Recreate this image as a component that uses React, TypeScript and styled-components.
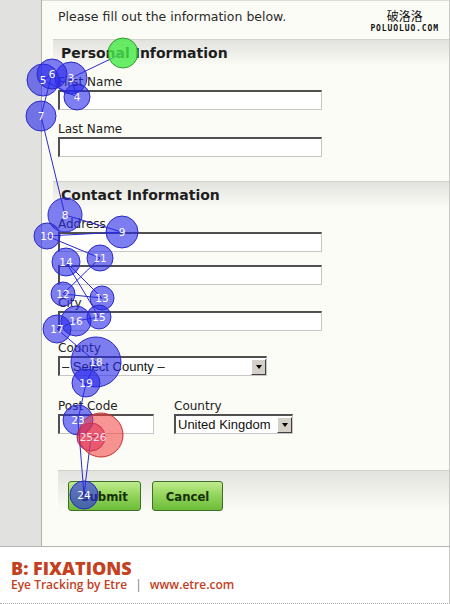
import React from "react";
import styled, { createGlobalStyle } from "styled-components";

const GlobalStyle = createGlobalStyle`
  html, body { margin: 0; padding: 0; background: #ffffff; }
  body { width: 450px; height: 604px; overflow: hidden; font-family: "DejaVu Sans", Verdana, sans-serif; }
  #root { width: 450px; height: 604px; }
`;

const Page = styled.div`
  position: relative;
  width: 450px;
  height: 604px;
  display: flex;
  flex-direction: column;
`;

const Main = styled.div`
  display: flex;
  height: 547px;
  flex: none;
  border-bottom: 1px solid #b4b4b2;
  box-sizing: border-box;
`;

const LeftStrip = styled.div`
  width: 41px;
  flex: none;
  background-color: #e6e7e5;
  background-image: radial-gradient(circle, #d9dbd9 0.6px, transparent 0.8px);
  background-size: 2px 2px;
  border-right: 1px solid #b0b0ae;
`;

const Content = styled.div`
  flex: 1;
  display: flex;
  flex-direction: column;
  background: #fcfcf6;
  border-top: 1px solid #dcdcd8;
  border-right: 1px solid #c8c8c6;
`;

const TopBar = styled.div`
  height: 38px;
  box-sizing: border-box;
  display: flex;
  justify-content: space-between;
  align-items: flex-start;
  padding: 8px 10px 0 16px;
`;

const Intro = styled.div`
  font-size: 12.5px;
  line-height: 16px;
  color: #2a2a2a;
`;

const Logo = styled.div`
  display: flex;
  flex-direction: column;
  align-items: center;
  color: #111;
`;

const LogoCjk = styled.div`
  font-family: "Noto Sans CJK SC", sans-serif;
  font-size: 12px;
  line-height: 14px;
`;

const LogoDomain = styled.div`
  font-family: "DejaVu Sans Mono", monospace;
  font-weight: bold;
  font-size: 8px;
  line-height: 8px;
  letter-spacing: 0.9px;
  margin-top: 2px;
`;

const Section = styled.section<{ $after: number }>`
  margin-left: 11px;
  border-top: 1px solid #d2d2ce;
  margin-bottom: ${(p) => p.$after}px;
`;

const SectionHeader = styled.h2`
  margin: 0;
  height: 26px;
  line-height: 26px;
  padding-left: 8px;
  font-size: 14px;
  font-weight: bold;
  color: #1e1e1e;
  background: linear-gradient(to bottom, #e2e2de, #fcfcf6);
`;

const Fields = styled.div`
  display: flex;
  flex-direction: column;
  padding: 9px 0 0 5px;
`;

const Field = styled.div<{ $gap?: number }>`
  display: flex;
  flex-direction: column;
  margin-top: ${(p) => p.$gap ?? 0}px;
`;

const Row = styled.div<{ $gap?: number }>`
  display: flex;
  gap: 20px;
  margin-top: ${(p) => p.$gap ?? 0}px;
`;

const Label = styled.label`
  font-size: 12px;
  line-height: 14px;
  color: #222;
  margin-bottom: 1px;
`;

const TextInput = styled.div<{ $w: number }>`
  width: ${(p) => p.$w}px;
  height: 20px;
  box-sizing: border-box;
  background: #ffffff;
  border-top: 2px solid #505050;
  border-left: 2px solid #505050;
  border-right: 1px solid #c6c6c6;
  border-bottom: 1px solid #c6c6c6;
`;

const SelectBox = styled.div<{ $w: number }>`
  width: ${(p) => p.$w}px;
  height: 20px;
  box-sizing: border-box;
  display: flex;
  align-items: center;
  background: #ffffff;
  border-top: 2px solid #505050;
  border-left: 2px solid #505050;
  border-right: 1px solid #c6c6c6;
  border-bottom: 1px solid #c6c6c6;
  padding-left: 2px;
  font-family: "Liberation Sans", Arial, sans-serif;
  font-size: 13px;
  color: #111;
`;

const SelectText = styled.span`
  flex: 1;
  white-space: nowrap;
  overflow: hidden;
`;

const ArrowButton = styled.span`
  width: 15px;
  height: 16px;
  box-sizing: border-box;
  display: flex;
  align-items: center;
  justify-content: center;
  background: #d4d0c8;
  border-top: 1px solid #ffffff;
  border-left: 1px solid #ffffff;
  border-right: 1px solid #404040;
  border-bottom: 1px solid #404040;
  &::after {
    content: "";
    border-left: 3.5px solid transparent;
    border-right: 3.5px solid transparent;
    border-top: 4px solid #000;
  }
`;

const ButtonBar = styled.div`
  margin: 36px 0 0 16px;
  border-top: 1px solid #d0d0cc;
  flex: 1;
  display: flex;
  align-items: flex-start;
  gap: 11px;
  padding: 10px 10px 0 10px;
  background: linear-gradient(to bottom, #e2e2de 0px, #fcfcf6 40px);
`;

const GreenButton = styled.button<{ $w: number }>`
  width: ${(p) => p.$w}px;
  height: 30px;
  border: 1px solid #3f6f26;
  border-radius: 3px;
  background: linear-gradient(to bottom, #bfeb8f 0%, #95d65c 45%, #6cbd3a 100%);
  font-family: "DejaVu Sans Condensed", "DejaVu Sans", sans-serif;
  font-stretch: condensed;
  font-weight: bold;
  font-size: 13px;
  color: #17300b;
  padding: 0;
`;

const Footer = styled.footer`
  flex: 1;
  box-sizing: border-box;
  padding: 11px 0 0 11px;
  border-right: 1px solid #c8c8c6;
  border-bottom: 1px dotted #a8a8a8;
  font-family: "Open Sans", sans-serif;
  color: #c4401e;
`;

const FooterTitle = styled.div`
  font-size: 18px;
  line-height: 20px;
  font-weight: 800;
`;

const FooterLine = styled.div`
  font-size: 12px;
  line-height: 14px;
  font-weight: 600;
`;

const Sep = styled.span`
  color: #777;
  font-weight: 400;
  margin: 0 8px;
`;

const Overlay = styled.svg`
  position: absolute;
  left: 0;
  top: 0;
  pointer-events: none;
`;

type Fix = { x: number; y: number; r: number; label?: string; kind: "blue" | "green" | "red" | "pink" };

const fixations: Fix[] = [
  { x: 123, y: 53, r: 15, kind: "green" },
  { x: 71, y: 78, r: 16, label: "3", kind: "blue" },
  { x: 77, y: 97, r: 13, label: "4", kind: "blue" },
  { x: 43, y: 80, r: 16, label: "5", kind: "blue" },
  { x: 52, y: 74, r: 15, label: "6", kind: "blue" },
  { x: 41, y: 116, r: 15, label: "7", kind: "blue" },
  { x: 65, y: 215, r: 17, label: "8", kind: "blue" },
  { x: 122, y: 232, r: 16, label: "9", kind: "blue" },
  { x: 47, y: 236, r: 13, label: "10", kind: "blue" },
  { x: 100, y: 258, r: 13, label: "11", kind: "blue" },
  { x: 63, y: 294, r: 12, label: "12", kind: "blue" },
  { x: 102, y: 298, r: 12, label: "13", kind: "blue" },
  { x: 66, y: 262, r: 14, label: "14", kind: "blue" },
  { x: 99, y: 317, r: 12, label: "15", kind: "blue" },
  { x: 76, y: 321, r: 15, label: "16", kind: "blue" },
  { x: 57, y: 329, r: 14, label: "17", kind: "blue" },
  { x: 96, y: 362, r: 25, label: "18", kind: "blue" },
  { x: 86, y: 383, r: 14, label: "19", kind: "blue" },
  { x: 78, y: 420, r: 15, label: "23", kind: "blue" },
  { x: 84, y: 495, r: 14, label: "24", kind: "blue" },
  { x: 91, y: 437, r: 14, kind: "pink" },
  { x: 101, y: 435, r: 22, kind: "red" },
];

const fills: Record<Fix["kind"], [string, string]> = {
  blue: ["rgba(40,40,235,0.6)", "#2a2ac4"],
  green: ["rgba(70,235,70,0.8)", "#2f9a2f"],
  red: ["rgba(240,60,60,0.55)", "#c83030"],
  pink: ["rgba(190,20,110,0.55)", "#a0206a"],
};

function Fixations() {
  const pts = fixations.map((f) => `${f.x},${f.y}`).join(" ");
  return (
    <Overlay width={450} height={604} viewBox="0 0 450 604">
      <polyline points={pts} fill="none" stroke="#2a2ad0" strokeWidth={1} />
      {fixations.map((f, i) => (
        <circle key={i} cx={f.x} cy={f.y} r={f.r} fill={fills[f.kind][0]} stroke={fills[f.kind][1]} strokeWidth={1} />
      ))}
      {fixations.map((f, i) =>
        f.label ? (
          <text
            key={"t" + i}
            x={f.x}
            y={f.y + 4}
            textAnchor="middle"
            fontFamily="DejaVu Sans, sans-serif"
            fontSize={10.5}
            fill="#ffffff"
          >
            {f.label}
          </text>
        ) : null
      )}
      <text x={93} y={441} textAnchor="middle" fontFamily="DejaVu Sans, sans-serif" fontSize={10.5} fill="#ffe0ee">
        2526
      </text>
    </Overlay>
  );
}

export default function App() {
  return (
    <>
      <GlobalStyle />
      <Page>
        <Main>
          <LeftStrip />
          <Content>
            <TopBar>
              <Intro>Please fill out the information below.</Intro>
              <Logo>
                <LogoCjk>破洛洛</LogoCjk>
                <LogoDomain>POLUOLUO.COM</LogoDomain>
              </Logo>
            </TopBar>

            <Section $after={24}>
              <SectionHeader>Personal Information</SectionHeader>
              <Fields>
                <Field>
                  <Label>First Name</Label>
                  <TextInput $w={264} />
                </Field>
                <Field $gap={12}>
                  <Label>Last Name</Label>
                  <TextInput $w={264} />
                </Field>
              </Fields>
            </Section>

            <Section $after={0}>
              <SectionHeader>Contact Information</SectionHeader>
              <Fields>
                <Field>
                  <Label>Address</Label>
                  <TextInput $w={264} />
                </Field>
                <Field $gap={13}>
                  <TextInput $w={264} />
                </Field>
                <Field $gap={11}>
                  <Label>City</Label>
                  <TextInput $w={264} />
                </Field>
                <Field $gap={10}>
                  <Label>County</Label>
                  <SelectBox $w={209}>
                    <SelectText>– Select County –</SelectText>
                    <ArrowButton />
                  </SelectBox>
                </Field>
                <Row $gap={23}>
                  <Field>
                    <Label>Post Code</Label>
                    <TextInput $w={96} />
                  </Field>
                  <Field>
                    <Label>Country</Label>
                    <SelectBox $w={119}>
                      <SelectText>United Kingdom</SelectText>
                      <ArrowButton />
                    </SelectBox>
                  </Field>
                </Row>
              </Fields>
            </Section>

            <ButtonBar>
              <GreenButton $w={73}>Submit</GreenButton>
              <GreenButton $w={71}>Cancel</GreenButton>
            </ButtonBar>
          </Content>
        </Main>
        <Footer>
          <FooterTitle>B: FIXATIONS</FooterTitle>
          <FooterLine>
            Eye Tracking by Etre<Sep>|</Sep>www.etre.com
          </FooterLine>
        </Footer>
        <Fixations />
      </Page>
    </>
  );
}
